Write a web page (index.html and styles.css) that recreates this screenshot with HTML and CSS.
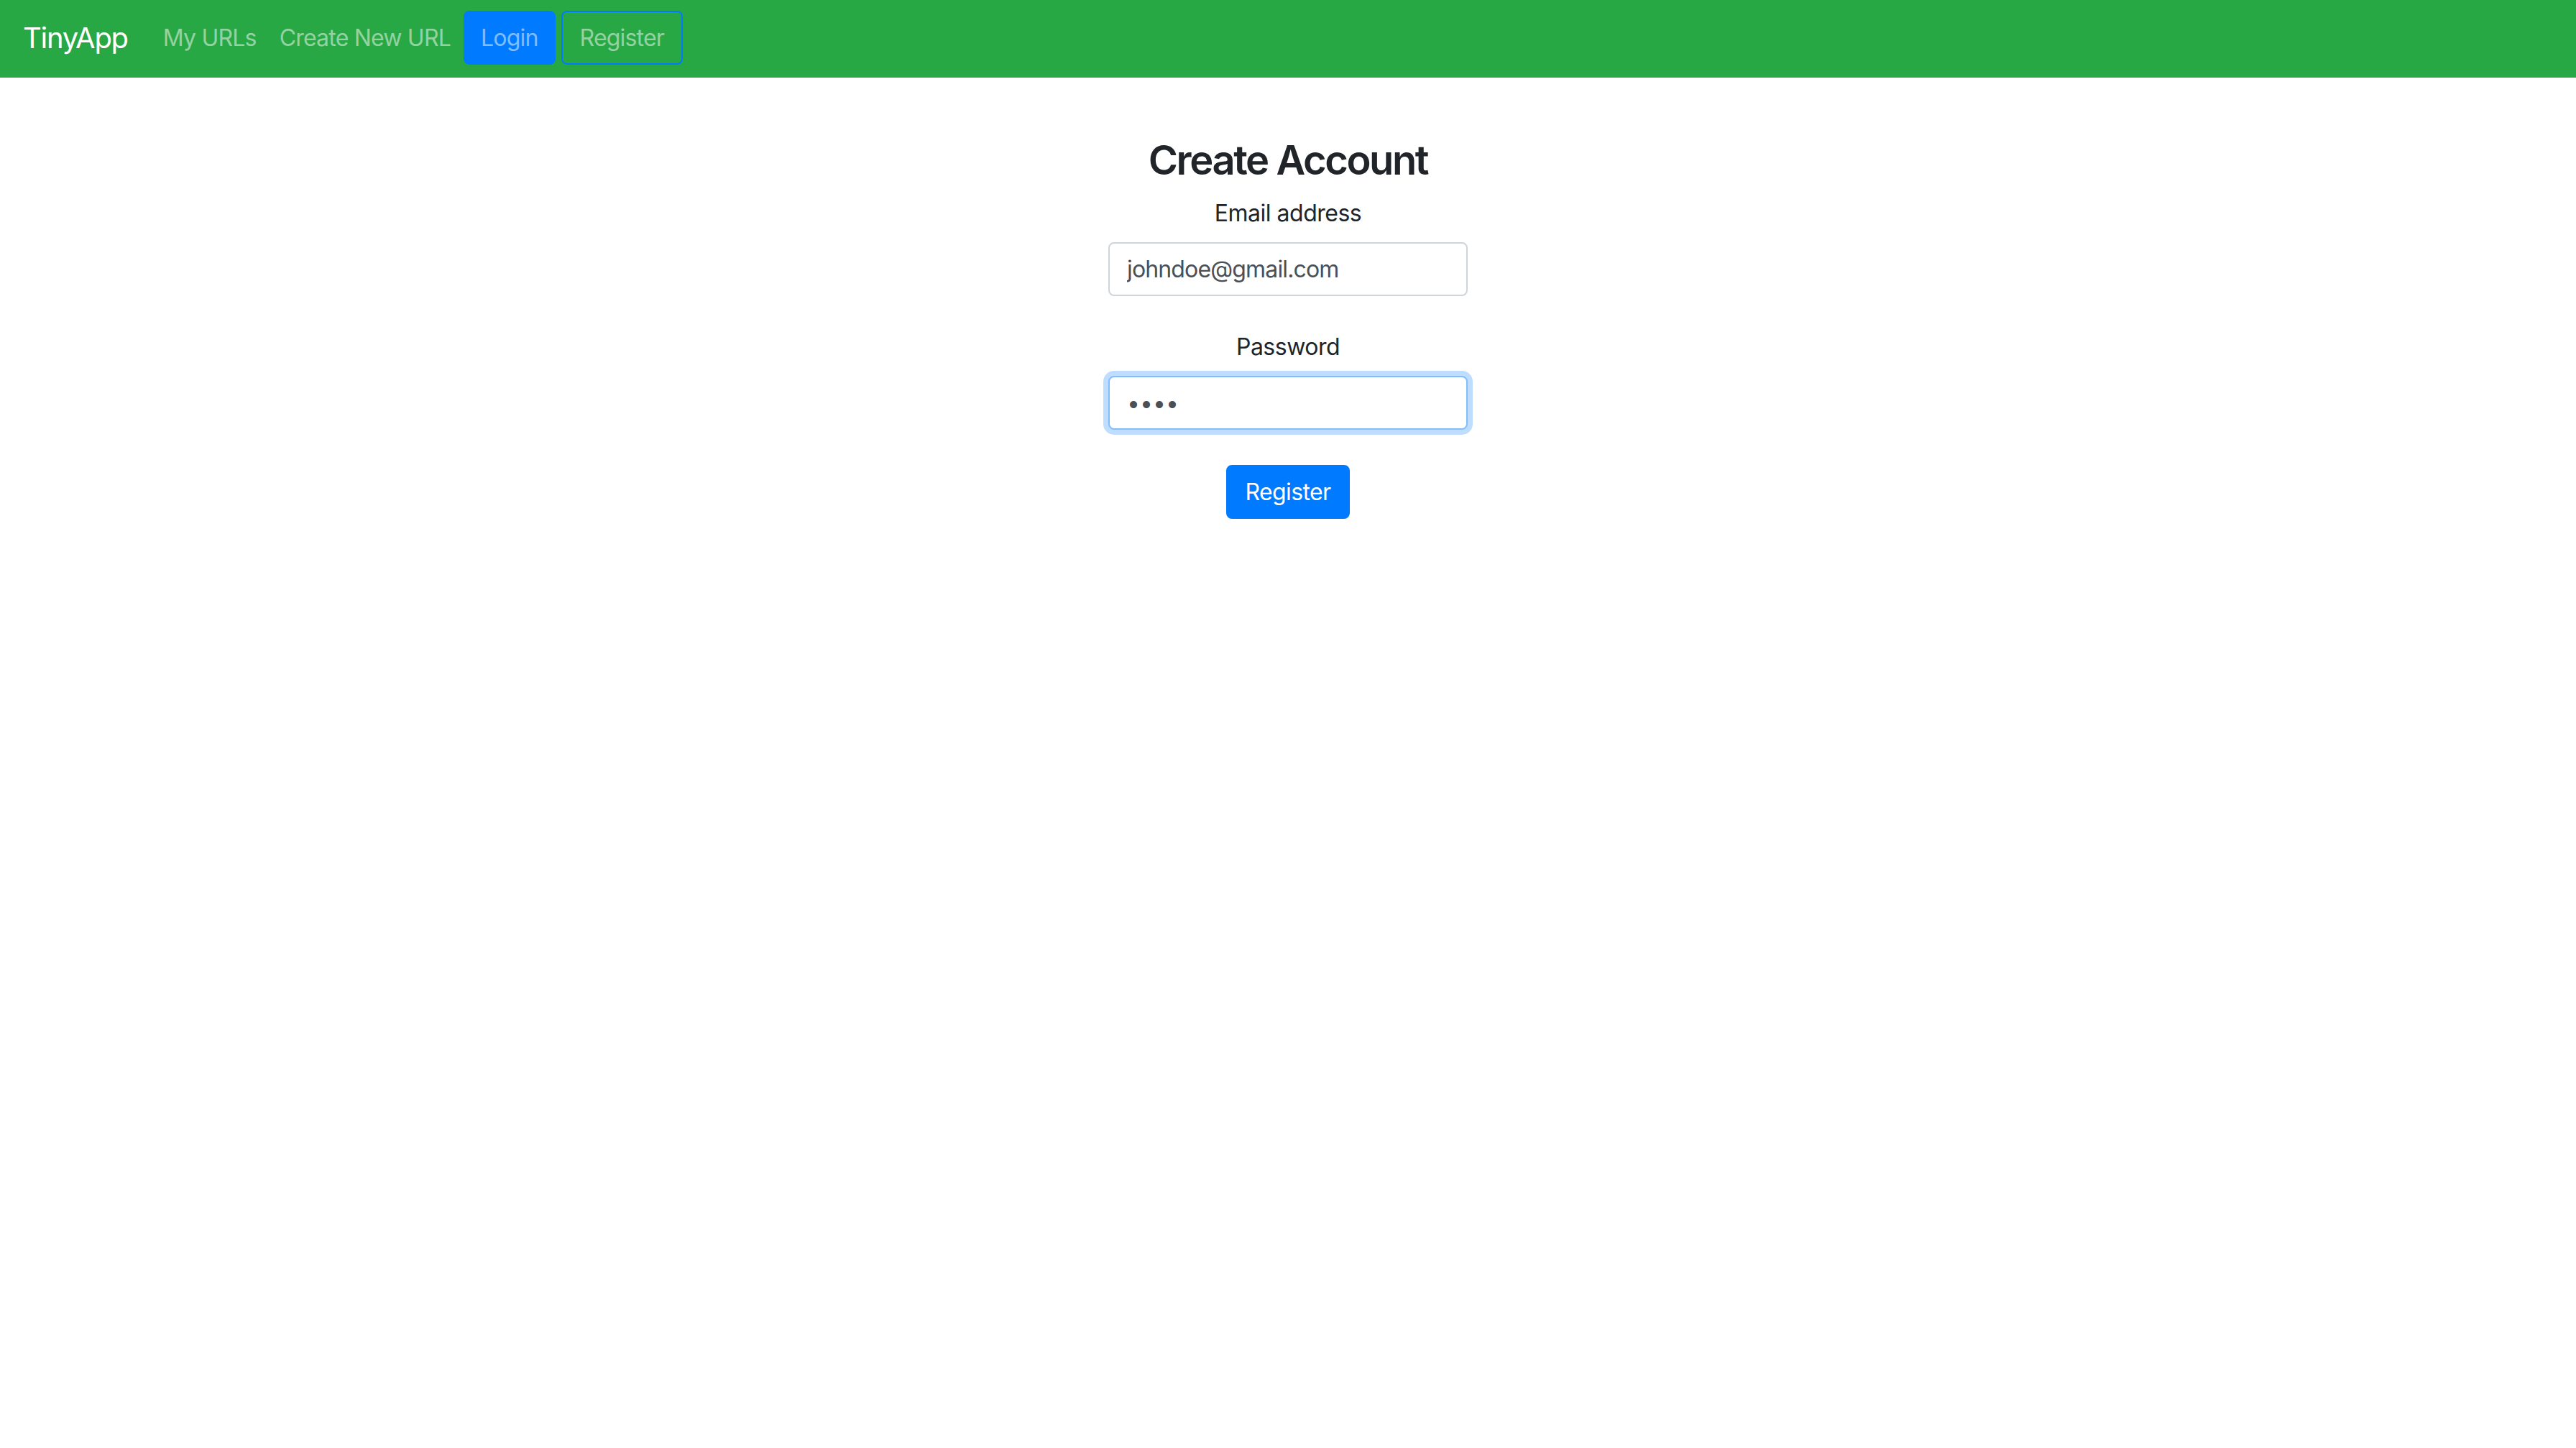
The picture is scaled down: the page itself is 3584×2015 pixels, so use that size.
FILE: index.html
```html
<!DOCTYPE html>
<html lang="en">
<head>
<meta charset="utf-8">
<title>TinyApp - Register</title>
<link rel="stylesheet" href="styles.css">
</head>
<body>
<nav class="navbar">
  <a class="brand" href="#">TinyApp</a>
  <ul class="nav">
    <li><a class="nav-link" href="#">My URLs</a></li>
    <li><a class="nav-link" href="#">Create New URL</a></li>
    <li><a class="btn btn-login" href="#">Login</a></li>
    <li><a class="btn btn-register-outline" href="#">Register</a></li>
  </ul>
</nav>
<main class="register">
  <h3 class="title">Create Account</h3>
  <form class="form">
    <div class="field field-email">
      <label class="label" for="email">Email address</label>
      <input class="input" id="email" type="email" value="johndoe@gmail.com">
    </div>
    <div class="field field-password">
      <label class="label" for="password">Password</label>
      <input class="input input-focus" id="password" type="password" value="abcd">
    </div>
    <button class="submit" type="button">Register</button>
  </form>
</main>
</body>
</html>
```
FILE: styles.css
```css
* { box-sizing: border-box; }
html, body { margin: 0; padding: 0; background: #fff; }
body {
  font-family: Inter, "Noto Sans", "Liberation Sans", sans-serif;
  color: #212529;
  font-size: 32px;
  line-height: 1.5;
}
.navbar {
  background: #28a745;
  height: 108px;
  display: flex;
  align-items: center;
  padding: 0 32px 3px 32px;
}
.brand {
  color: #fff;
  text-decoration: none;
  font-size: 40px;
  line-height: 60px;
  margin-right: 33px;
  letter-spacing: -1.3px;
}
.nav {
  list-style: none;
  margin: 0;
  padding: 0;
  display: flex;
  align-items: center;
}
.nav-link {
  display: block;
  color: rgba(255,255,255,0.5);
  text-decoration: none;
  padding: 16px 16px;
  line-height: 48px;
  letter-spacing: -0.8px;
}
.btn {
  display: block;
  text-decoration: none;
  color: rgba(255,255,255,0.5);
  height: 75px;
  line-height: 71px;
  border: 2px solid #007bff;
  border-radius: 8px;
  padding: 0 22px;
  letter-spacing: -0.8px;
}
.btn-login { background: #007bff; margin-left: 2px; }
.btn-register-outline { background: transparent; margin-left: 8px; padding: 0 24px; }
.register {
  display: flex;
  flex-direction: column;
  align-items: center;
  text-align: center;
}
.title {
  margin: 82px 0 16px 0;
  font-size: 56px;
  font-weight: 600;
  line-height: 1.2;
  letter-spacing: -2.4px;
}
.form {
  display: flex;
  flex-direction: column;
  align-items: center;
  width: 500px;
}
.field {
  display: flex;
  flex-direction: column;
  align-items: center;
  width: 100%;
}
.field-password { margin-top: 47px; }
.label {
  display: block;
  line-height: 48px;
  margin-bottom: 16px;
  letter-spacing: -0.5px;
}
.input {
  width: 100%;
  height: 75px;
  border: 2px solid #ced4da;
  border-radius: 8px;
  padding: 0 24px;
  font-family: inherit;
  font-size: 32px;
  color: #495057;
  background: #fff;
  outline: none;
  letter-spacing: -0.85px;
}
.input-focus {
  border-color: #80bdff;
  box-shadow: 0 0 0 7px rgba(0,123,255,0.25);
  letter-spacing: 0;
}
.submit {
  margin-top: 49px;
  height: 75px;
  padding: 0 24px;
  border: 2px solid #007bff;
  background: #007bff;
  color: #fff;
  border-radius: 8px;
  font-family: inherit;
  font-size: 32px;
  line-height: 71px;
  letter-spacing: -0.6px;
  cursor: pointer;
}
```
